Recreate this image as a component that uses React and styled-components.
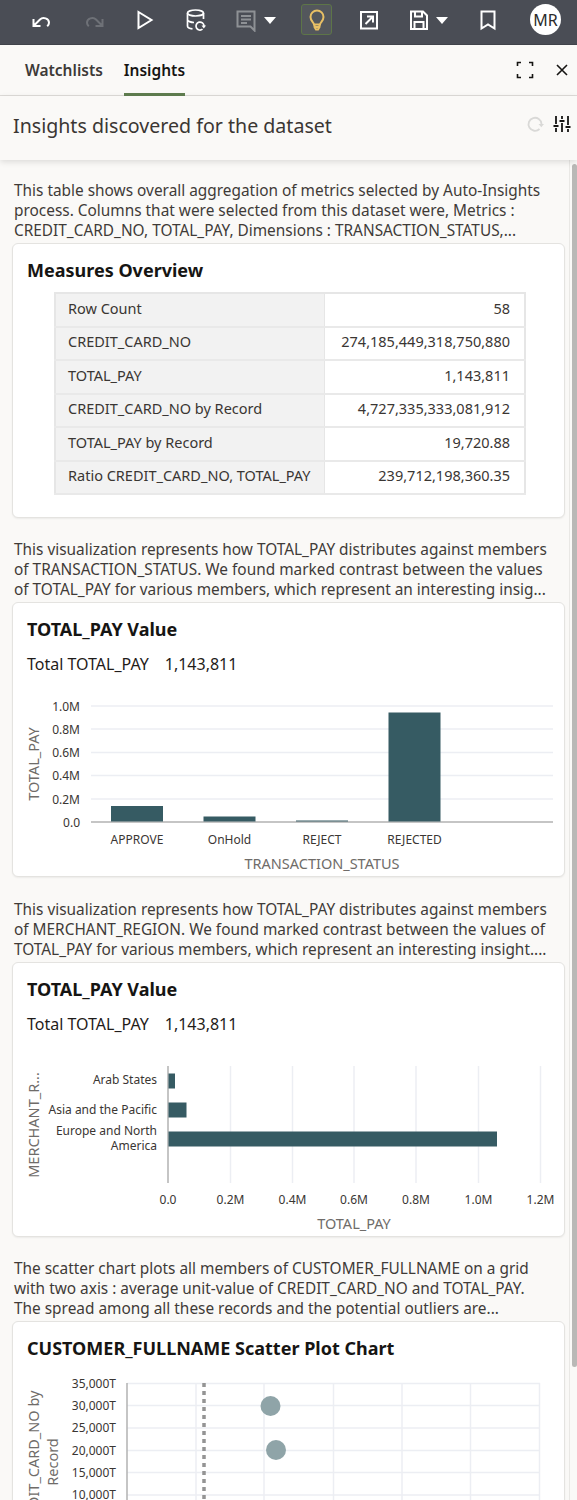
import styled, { createGlobalStyle } from 'styled-components';

const Global = createGlobalStyle`
    html, body {
        margin: 0;
        padding: 0;
        background: #faf9f7;
    }
    * {
        box-sizing: border-box;
    }
`

const Page = styled.div`
    width: 577px;
    height: 1500px;
    overflow: hidden;
    display: flex;
    flex-direction: column;
    font-family: "Noto Sans", "Liberation Sans", sans-serif;
    color: #312d2a;
    background: #faf9f7;
`

const TopBar = styled.div`
    flex: none;
    height: 45px;
    padding: 4px 16px 9px 27.5px;
    display: flex;
    align-items: center;
    gap: 21.25px;
    background: #4a4d55;
    border-bottom: 1px solid #40434a;
`

const IconButton = styled.div`
    width: ${props => props.$width || 30}px;
    height: 31px;
    padding-left: ${props => props.$pad || 0}px;
    display: flex;
    align-items: center;
    justify-content: ${props => props.$width ? 'flex-start' : 'center'};
    color: ${props => props.$color || '#fff'};
    ${props => props.$active && `
        background: #53575c;
        border: 1px solid #5d7548;
        border-radius: 3px;
        width: 31px;
        justify-content: center;
    `}
`

const Caret = styled.span`
    margin: 1px 0 0 ${props => props.$gap}px;
    width: 0;
    height: 0;
    border-left: 6px solid transparent;
    border-right: 6px solid transparent;
    border-top: 7px solid #fff;
`

const Avatar = styled.div`
    margin-left: 6px;
    width: 31px;
    height: 31px;
    border-radius: 50%;
    background: #fff;
    color: #2b2b2b;
    font-size: 16px;
    display: flex;
    align-items: center;
    justify-content: center;
`

const TabRow = styled.div`
    flex: none;
    height: 51px;
    padding: 0 8px 0 25px;
    display: flex;
    align-items: stretch;
    gap: 21px;
    border-bottom: 1px solid #dedcd9;
`

const Tab = styled.div`
    display: flex;
    align-items: center;
    padding-top: 2px;
    font-size: 15.5px;
    font-weight: 600;
    color: ${props => props.$active ? '#161513' : '#3d3a37'};
    border-bottom: 3px solid ${props => props.$active ? '#5f7d4f' : 'transparent'};
    margin-bottom: -1px;
`

const TabTools = styled.div`
    margin-left: auto;
    display: flex;
    align-items: center;
    gap: 21px;
    color: #161513;
`

const Header = styled.div`
    flex: none;
    height: 64px;
    padding: 0 6px 6px 13px;
    display: flex;
    align-items: center;
    box-shadow: 0 2px 6px rgba(0, 0, 0, 0.12);
    position: relative;
    z-index: 1;
`

const HeaderTitle = styled.h1`
    margin: 0;
    font-size: 19.6px;
    font-weight: 400;
    color: #3a3633;
`

const HeaderTools = styled.div`
    margin: 0 0 3px auto;
    display: flex;
    align-items: center;
    gap: 9px;
    color: #161513;
`

const Body = styled.div`
    flex: 1;
    min-height: 0;
    display: flex;
`

const Content = styled.div`
    flex: none;
    width: 569px;
    padding: 20px 4px 0 12px;
`

const Track = styled.div`
    flex: 1;
    padding: 4px 0 0 2px;
    border-left: 1px solid #e9e8e5;
`

const Thumb = styled.div`
    height: 1203px;
    border-radius: 4px;
    background: #b9b8b6;
`

const Section = styled.section`
    margin-bottom: 21.33px;
`

const Desc = styled.p`
    margin: 0 13px 3px 2px;
    padding-top: 1px;
    font-size: 15.4px;
    line-height: 20px;
    height: 60px;
    color: #3f3b38;
`

const Card = styled.div`
    height: 275px;
    padding-top: 14px;
    background: #fff;
    border: 1px solid #e4e3e0;
    border-radius: 6px;
    box-shadow: 0 1px 2px rgba(0, 0, 0, 0.06);
`

const CardTitle = styled.h2`
    margin: 0 0 0 14px;
    font-size: 18px;
    line-height: 24px;
    font-weight: 700;
    color: #161513;
`

const Total = styled.div`
    margin: 12px 0 0 14px;
    display: flex;
    gap: 16px;
    font-size: 16px;
    line-height: 22px;
    color: #1f1c1a;
`

const Table = styled.table`
    margin: 10px 0 0 41px;
    width: 472px;
    border-collapse: collapse;
    border: 2px solid #e6e6e6;
    font-size: 14.5px;
    color: #3a3633;
`

const Row = styled.tr`
    height: 33.5px;
    border-bottom: 2px solid #e9e9e9;
`

const LabelCell = styled.td`
    width: 269px;
    padding: 0 0 4px 12px;
    background: #f2f2f2;
    border-right: 1px solid #e6e6e6;
`

const ValueCell = styled.td`
    padding: 0 14px 4px 0;
    text-align: right;
`

const ChartSvg = styled.svg`
    display: block;
    margin-top: ${props => props.$top || 0}px;
    font-family: "Noto Sans", "Liberation Sans", sans-serif;
    font-size: 12px;
    fill: #3a3633;
`

const AxisTitle = styled.text`
    font-size: 14.5px;
    fill: #6f6c69;
    text-anchor: middle;
`

const iconProps = {
    fill: 'none',
    stroke: 'currentColor',
    strokeWidth: 2,
    viewBox: '0 0 24 24',
    width: 24,
    height: 24,
}

const UndoIcon = () => (
    <svg {...iconProps}>
        <path d="M3.5 11v7h7M3.5 18l6.5-6.5c3-3 9-1 9 3.2 0 1.6-.7 2.6-1.8 3.6" />
    </svg>
)

const RedoIcon = () => (
    <svg {...iconProps}>
        <path d="M20.5 11v7h-7M20.5 18l-6.5-6.5c-3-3-9-1-9 3.2 0 1.6.7 2.6 1.8 3.6" />
    </svg>
)

const PlayIcon = () => (
    <svg {...iconProps}>
        <path d="M5.5 4 18.5 12 5.5 20z" />
    </svg>
)

const DatasetIcon = () => (
    <svg {...iconProps} strokeWidth={1.7}>
        <ellipse cx="11.5" cy="5" rx="8" ry="3" />
        <path d="M3.5 5v13c0 1.6 2.2 2.6 5 2.9M19.5 5v6M3.5 11.5c0 1.7 3.4 3 6.5 3" />
        <path d="M20 18a4 4 0 1 0-1.5 3.2" />
        <path d="M17.5 17.5h4.6l-2.3 3z" fill="currentColor" stroke="none" />
    </svg>
)

const CommentIcon = () => (
    <svg {...iconProps}>
        <path d="M3.5 3.5h17v19l-4-4h-13zM7 8h10M7 11.5h10M7 15h6" />
    </svg>
)

const BulbIcon = () => (
    <svg {...iconProps}>
        <path d="M9 16.5c0-2-3.5-3.5-3.5-7.5a6.5 6.5 0 0 1 13 0c0 4-3.5 5.5-3.5 7.5zM9.5 16.5v2.5l1.5 2.5h2l1.5-2.5v-2.5M9.5 19h5" />
    </svg>
)

const ShareIcon = () => (
    <svg {...iconProps}>
        <path d="M4 4h16v16.5h-16zM8.5 16l7-7M10 8.5h6v6" />
    </svg>
)

const SaveIcon = () => (
    <svg {...iconProps}>
        <path d="M4 3.5h12l4 4v13.5h-16zM8 3.5v5h7v-5M7.5 21v-7h9v7" />
    </svg>
)

const BookmarkIcon = () => (
    <svg {...iconProps}>
        <path d="M5.5 3.5h13v17l-6.5-4-6.5 4z" />
    </svg>
)

const ExpandIcon = () => (
    <svg {...iconProps} strokeWidth={1.6} width={18} height={18} viewBox="0 0 18 18">
        <path d="M1.5 5v-3.5h3.5M13 1.5h3.5v3.5M16.5 13v3.5h-3.5M5 16.5h-3.5v-3.5" />
    </svg>
)

const CloseIcon = () => (
    <svg {...iconProps} strokeWidth={1.6} width={14} height={14} viewBox="0 0 14 14">
        <path d="M2 2l10 10M12 2 2 12" />
    </svg>
)

const RefreshIcon = () => (
    <svg {...iconProps} strokeWidth={1.8} width={18} height={18} viewBox="0 0 18 18" color="#d9d9d7">
        <path d="M15.5 9a6.5 6.5 0 1 0-2 5" />
        <path d="M12.5 9h5.5l-2.7 3.2z" fill="currentColor" stroke="none" />
    </svg>
)

const SlidersIcon = () => (
    <svg {...iconProps} strokeWidth={1.8} width={18} height={18} viewBox="0 0 18 18">
        <path d="M3 1v8M3 13v4M9 1v3M9 8v9M15 1v9M15 14v3" />
        <path d="M.5 11h5M6.5 6h5M12.5 12h5" strokeWidth={2} />
    </svg>
)

const measures = [
    ['Row Count', '58'],
    ['CREDIT_CARD_NO', '274,185,449,318,750,880'],
    ['TOTAL_PAY', '1,143,811'],
    ['CREDIT_CARD_NO by Record', '4,727,335,333,081,912'],
    ['TOTAL_PAY by Record', '19,720.88'],
    ['Ratio CREDIT_CARD_NO, TOTAL_PAY', '239,712,198,360.35'],
]

const BAR = '#365b63'
const GRID = '#eceef3'
const AXIS = '#b2b2b2'

const VerticalBars = () => {
    const ticks = [['1.0M', 707], ['0.8M', 730], ['0.6M', 753.5], ['0.4M', 776.5], ['0.2M', 800], ['0.0', 823]]
    const bars = [
        ['APPROVE', 111, 807],
        ['OnHold', 203.5, 817.5],
        ['REJECT', 296, 821.5],
        ['REJECTED', 388.5, 713.5],
    ]
    return (
        <ChartSvg $top={14} width={551} height={186} viewBox="13 690 551 186">
            {ticks.map(([label, y]) => (
                <g key={label}>
                    <line x1="91" x2="553" y1={y} y2={y} stroke={label === '0.0' ? AXIS : GRID} strokeWidth="1.5" />
                    <text x="80" y={y + 4.5} textAnchor="end">{label}</text>
                </g>
            ))}
            {bars.map(([label, x, top]) => (
                <g key={label}>
                    <rect x={x} y={top} width="52" height={822.5 - top} fill={BAR} />
                    <text x={x + 26} y="844.5" textAnchor="middle">{label}</text>
                </g>
            ))}
            <AxisTitle x="322" y="870">TRANSACTION_STATUS</AxisTitle>
            <AxisTitle transform="rotate(-90 39 765)" x="39" y="765">TOTAL_PAY</AxisTitle>
        </ChartSvg>
    )
}

const HorizontalBars = () => {
    const grid = [
        ['0.0', 168], ['0.2M', 230.5], ['0.4M', 292.5], ['0.6M', 354],
        ['0.8M', 416], ['1.0M', 478.5], ['1.2M', 540.5],
    ]
    const bars = [
        [1073.5, 175],
        [1102.5, 186.5],
        [1131.5, 497],
    ]
    return (
        <ChartSvg $top={14} width={551} height={186} viewBox="13 1049 551 186">
            {grid.map(([label, x]) => (
                <g key={label}>
                    <line x1={x} x2={x} y1="1066" y2="1183" stroke={label === '0.0' ? AXIS : GRID} strokeWidth="1.5" />
                    <text x={x} y="1203.5" textAnchor="middle">{label}</text>
                </g>
            ))}
            {bars.map(([y, end]) => (
                <rect key={y} x="168.5" y={y} width={end - 168.5} height="15" fill={BAR} />
            ))}
            <text x="157" y="1084" textAnchor="end">Arab States</text>
            <text x="157" y="1113.5" textAnchor="end">Asia and the Pacific</text>
            <text x="157" y="1134.5" textAnchor="end">Europe and North</text>
            <text x="157" y="1150" textAnchor="end">America</text>
            <AxisTitle x="354" y="1229">TOTAL_PAY</AxisTitle>
            <AxisTitle transform="rotate(-90 39 1125)" x="39" y="1125">MERCHANT_R...</AxisTitle>
        </ChartSvg>
    )
}

const ScatterPlot = () => {
    const rows = [
        ['35,000T', 1383.5], ['30,000T', 1405.5], ['25,000T', 1428],
        ['20,000T', 1450.5], ['15,000T', 1472.5], ['10,000T', 1495],
    ]
    const columns = [196, 264, 333.5, 402, 470.5, 539.5]
    return (
        <ChartSvg $top={10} width={551} height={140} viewBox="13 1370 551 140">
            {rows.map(([label, y]) => (
                <g key={label}>
                    <line x1="127" x2="540" y1={y} y2={y} stroke={GRID} strokeWidth="1.5" />
                    <text x="116" y={y + 4} textAnchor="end">{label}</text>
                </g>
            ))}
            {columns.map(x => (
                <line key={x} x1={x} x2={x} y1="1383" y2="1510" stroke={GRID} strokeWidth="1.5" />
            ))}
            <line x1="127" x2="127" y1="1383" y2="1510" stroke={AXIS} strokeWidth="1.5" />
            <line x1="204" x2="204" y1="1383" y2="1510" stroke="#949494" strokeWidth="3.5" strokeDasharray="4 4" />
            <circle cx="270.5" cy="1406" r="10" fill="#8fa4a8" />
            <circle cx="276" cy="1450" r="10" fill="#8fa4a8" />
            <AxisTitle transform="rotate(-90 39 1462)" x="39" y="1462">CREDIT_CARD_NO by</AxisTitle>
            <AxisTitle transform="rotate(-90 58 1462)" x="58" y="1462">Record</AxisTitle>
        </ChartSvg>
    )
}

const App = () => {
    return (
        <Page>
            <Global />
            <TopBar>
                <IconButton><UndoIcon /></IconButton>
                <IconButton $color="#6e7177"><RedoIcon /></IconButton>
                <IconButton><PlayIcon /></IconButton>
                <IconButton><DatasetIcon /></IconButton>
                <IconButton $width={48} $pad={2} $color="#8e9195"><CommentIcon /><Caret $gap={6} /></IconButton>
                <IconButton $active $color="#e8c065"><BulbIcon /></IconButton>
                <IconButton><ShareIcon /></IconButton>
                <IconButton $width={47} $pad={2.5}><SaveIcon /><Caret $gap={5} /></IconButton>
                <IconButton><BookmarkIcon /></IconButton>
                <Avatar>MR</Avatar>
            </TopBar>
            <TabRow>
                <Tab>Watchlists</Tab>
                <Tab $active>Insights</Tab>
                <TabTools>
                    <ExpandIcon />
                    <CloseIcon />
                </TabTools>
            </TabRow>
            <Header>
                <HeaderTitle>Insights discovered for the dataset</HeaderTitle>
                <HeaderTools>
                    <RefreshIcon />
                    <SlidersIcon />
                </HeaderTools>
            </Header>
            <Body>
                <Content>
                    <Section>
                        <Desc>
                            This table shows overall aggregation of metrics selected by Auto-Insights process. Columns that were selected from this dataset were, Metrics : CREDIT_CARD_NO, TOTAL_PAY, Dimensions : TRANSACTION_STATUS,...
                        </Desc>
                        <Card>
                            <CardTitle>Measures Overview</CardTitle>
                            <Table>
                                <tbody>
                                    {measures.map(([label, value]) => (
                                        <Row key={label}>
                                            <LabelCell>{label}</LabelCell>
                                            <ValueCell>{value}</ValueCell>
                                        </Row>
                                    ))}
                                </tbody>
                            </Table>
                        </Card>
                    </Section>
                    <Section>
                        <Desc>
                            This visualization represents how TOTAL_PAY distributes against members of TRANSACTION_STATUS. We found marked contrast between the values of TOTAL_PAY for various members, which represent an interesting insig...
                        </Desc>
                        <Card>
                            <CardTitle>TOTAL_PAY Value</CardTitle>
                            <Total><span>Total TOTAL_PAY</span><span>1,143,811</span></Total>
                            <VerticalBars />
                        </Card>
                    </Section>
                    <Section>
                        <Desc>
                            This visualization represents how TOTAL_PAY distributes against members of MERCHANT_REGION. We found marked contrast between the values of TOTAL_PAY for various members, which represent an interesting insight....
                        </Desc>
                        <Card>
                            <CardTitle>TOTAL_PAY Value</CardTitle>
                            <Total><span>Total TOTAL_PAY</span><span>1,143,811</span></Total>
                            <HorizontalBars />
                        </Card>
                    </Section>
                    <Section>
                        <Desc>
                            The scatter chart plots all members of CUSTOMER_FULLNAME on a grid with two axis : average unit-value of CREDIT_CARD_NO and TOTAL_PAY. The spread among all these records and the potential outliers are...
                        </Desc>
                        <Card>
                            <CardTitle>CUSTOMER_FULLNAME Scatter Plot Chart</CardTitle>
                            <ScatterPlot />
                        </Card>
                    </Section>
                </Content>
                <Track><Thumb /></Track>
            </Body>
        </Page>
    )
}

export default App
